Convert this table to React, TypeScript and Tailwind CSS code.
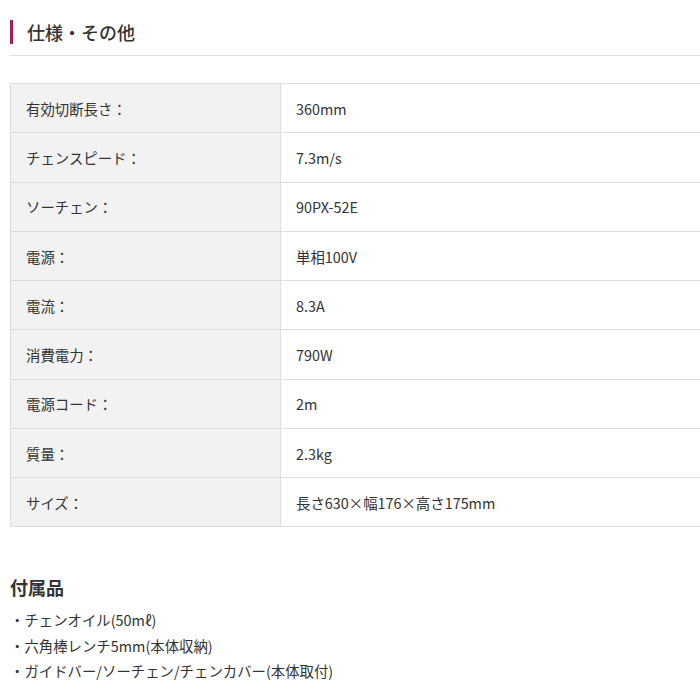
const specs: [string, string][] = [
  ['有効切断長さ：', '360mm'],
  ['チェンスピード：', '7.3m/s'],
  ['ソーチェン：', '90PX-52E'],
  ['電源：', '単相100V'],
  ['電流：', '8.3A'],
  ['消費電力：', '790W'],
  ['電源コード：', '2m'],
  ['質量：', '2.3kg'],
  ['サイズ：', '長さ630×幅176×高さ175mm'],
]

const accessories = [
  'チェンオイル(50mℓ)',
  '六角棒レンチ5mm(本体収納)',
  'ガイドバー/ソーチェン/チェンカバー(本体取付)',
]

export default function App() {
  return (
    <div className="w-[700px] h-[700px] overflow-hidden bg-white text-[#333] font-['Noto_Sans_CJK_JP','Noto_Sans',sans-serif]">
      <div className="pl-[10px] pt-[20px]">
        <div className="flex items-center h-[24px]">
          <span className="w-[3px] h-[24px] bg-[#a3204a]" />
          <h2 className="ml-[14px] text-[18px] font-medium leading-none">仕様・その他</h2>
        </div>
        <div className="mt-[11px] border-t border-[#e0e0e0] w-[700px]" />
        <table className="mt-[27px] w-[720px] border-collapse text-[14.4px]">
          <tbody>
            {specs.map(([k, v]) => (
              <tr key={k} className="h-[49.25px]">
                <th className="w-[270px] bg-[#f2f2f2] border border-[#dddddd] text-left font-normal pl-[15px] pt-[1px] align-middle">
                  {k}
                </th>
                <td className="border border-[#dddddd] pl-[15px] pt-[1px] align-middle">{v}</td>
              </tr>
            ))}
          </tbody>
        </table>
        <h3 className="mt-[51px] text-[18px] font-bold leading-none">付属品</h3>
        <ul className="mt-[11px] text-[14.4px] leading-[25.5px]">
          {accessories.map(a => (
            <li key={a}>・{a}</li>
          ))}
        </ul>
      </div>
    </div>
  )
}
